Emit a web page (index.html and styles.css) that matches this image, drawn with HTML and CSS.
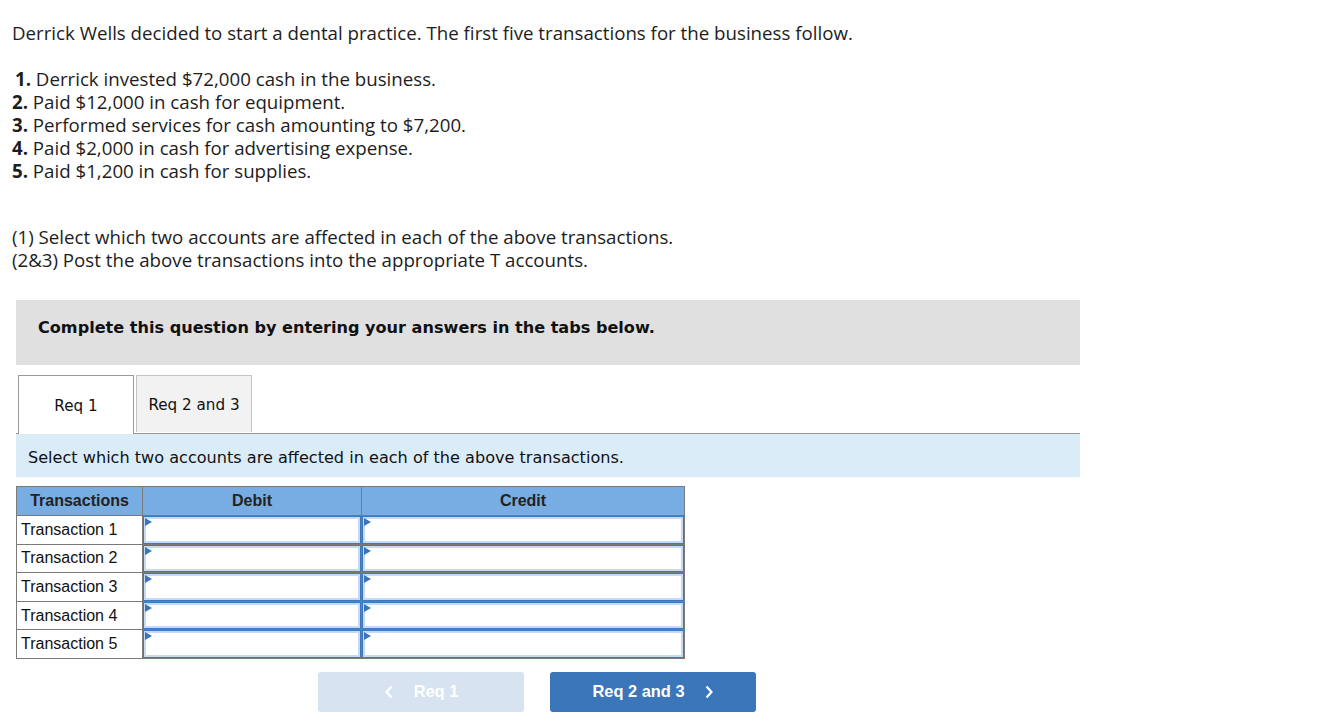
FILE: index.html
```html
<!DOCTYPE html>
<html>
<head>
<meta charset="utf-8">
<link rel="stylesheet" href="styles.css">
</head>
<body>
<div class="page">
  <p class="intro">Derrick Wells decided to start a dental practice. The first five transactions for the business follow.</p>
  <ol class="txlist">
    <li><b class="n1">1.</b> Derrick invested $72,000 cash in the business.</li>
    <li><b>2.</b> Paid $12,000 in cash for equipment.</li>
    <li><b>3.</b> Performed services for cash amounting to $7,200.</li>
    <li><b>4.</b> Paid $2,000 in cash for advertising expense.</li>
    <li><b>5.</b> Paid $1,200 in cash for supplies.</li>
  </ol>
  <div class="reqs">
    <div>(1) Select which two accounts are affected in each of the above transactions.</div>
    <div>(2&amp;3) Post the above transactions into the appropriate T accounts.</div>
  </div>

  <div class="question">
    <div class="banner">Complete this question by entering your answers in the tabs below.</div>
    <div class="tabs">
      <div class="tab active">Req 1</div>
      <div class="tab">Req 2 and 3</div>
    </div>
    <div class="instr">Select which two accounts are affected in each of the above transactions.</div>
    <table class="grid">
      <thead>
        <tr><th class="c1">Transactions</th><th class="c2">Debit</th><th class="c3">Credit</th></tr>
      </thead>
      <tbody>
        <tr><td class="label">Transaction 1</td><td class="cell"><div class="sel"></div></td><td class="cell"><div class="sel"></div></td></tr>
        <tr><td class="label">Transaction 2</td><td class="cell"><div class="sel"></div></td><td class="cell"><div class="sel"></div></td></tr>
        <tr><td class="label">Transaction 3</td><td class="cell"><div class="sel"></div></td><td class="cell"><div class="sel"></div></td></tr>
        <tr><td class="label">Transaction 4</td><td class="cell"><div class="sel"></div></td><td class="cell"><div class="sel"></div></td></tr>
        <tr><td class="label">Transaction 5</td><td class="cell"><div class="sel"></div></td><td class="cell"><div class="sel"></div></td></tr>
      </tbody>
    </table>
    <div class="nav">
      <div class="btn prev"><svg class="chev" width="10" height="14" viewBox="0 0 10 14"><path d="M7.5 1.5 L2.5 7 L7.5 12.5" fill="none" stroke="#fff" stroke-width="2.2"/></svg>Req 1</div>
      <div class="btn next">Req 2 and 3<svg class="chev" width="10" height="14" viewBox="0 0 10 14"><path d="M2.5 1.5 L7.5 7 L2.5 12.5" fill="none" stroke="#fff" stroke-width="2.2"/></svg></div>
    </div>
  </div>
</div>
</body>
</html>
```

FILE: styles.css
```css
html, body {
  margin: 0;
  padding: 0;
  background: #fff;
}
.page {
  padding: 21px 0 0 12px;
  font-family: "Open Sans", "Liberation Sans", sans-serif;
  color: #1d1d1d;
  font-size: 18.7px;
}
.intro {
  margin: 0;
  line-height: 23px;
}
.txlist {
  list-style: none;
  margin: 23px 0 0 0;
  padding: 0;
  line-height: 23px;
}
.txlist b {
  font-weight: 700;
}
.txlist .n1 {
  margin-left: 3px;
}
.reqs {
  margin-top: 43px;
  line-height: 23px;
}
.question {
  margin: 29px 0 0 4px;
  width: 1064px;
}
.banner {
  background: #e0e0e0;
  height: 65px;
  box-sizing: border-box;
  padding: 18px 0 0 22px;
  font-family: "DejaVu Sans", Verdana, sans-serif;
  font-weight: 700;
  font-size: 16.1px;
  color: #111;
}
.tabs {
  display: flex;
  gap: 2px;
  margin-top: 10px;
  padding-left: 2px;
  border-bottom: 1px solid #999;
  height: 58px;
}
.tab {
  width: 116px;
  height: 57px;
  box-sizing: border-box;
  padding-top: 2px;
  border: 1px solid #c4c4c4;
  border-bottom: none;
  background: #f2f2f2;
  font-family: "DejaVu Sans", Verdana, sans-serif;
  font-size: 15.2px;
  color: #111;
  display: flex;
  align-items: center;
  justify-content: center;
}
.tab.active {
  background: #fff;
  border-color: #999;
  height: 59px;
  margin-bottom: -1px;
}
.instr {
  background: #dbecf9;
  height: 43px;
  box-sizing: border-box;
  padding: 14px 0 0 12px;
  font-family: "DejaVu Sans", Verdana, sans-serif;
  font-size: 16.1px;
  color: #111;
}
.grid {
  margin-top: 9px;
  border-collapse: collapse;
  font-family: "Liberation Sans", Arial, sans-serif;
  font-size: 16px;
  color: #111;
}
.grid th {
  background: #78ade3;
  border: 1px solid #7a7a7a;
  height: 28px;
  padding: 0;
  font-weight: 700;
  color: #222;
}
.grid .c1 { width: 125px; }
.grid .c2 { width: 218px; }
.grid .c3 { width: 322px; }
.grid td {
  border: 1px solid #7a7a7a;
  height: 27.6px;
  padding: 0;
}
.grid td.label {
  padding-left: 4px;
}
.grid td.cell {
  padding: 0;
}
.sel {
  position: relative;
  height: 27.6px;
  box-sizing: border-box;
  border: 1px solid #3f78be;
  box-shadow: inset 0 0 0 2px #c6daf3;
  background: #fff;
}
.sel::before {
  content: "";
  position: absolute;
  left: 1px;
  top: 1px;
  border-left: 7px solid #3a74bd;
  border-top: 4px solid transparent;
  border-bottom: 4px solid transparent;
}
.nav {
  display: flex;
  gap: 26px;
  margin: 13px 0 0 302px;
}
.btn {
  width: 206px;
  height: 40px;
  border-radius: 3px;
  display: flex;
  align-items: center;
  justify-content: center;
  font-family: "Liberation Sans", Arial, sans-serif;
  font-weight: 700;
  font-size: 16.4px;
  color: #fff;
}
.btn.prev {
  background: #d7e3f1;
}
.btn.next {
  background: #3a76b9;
}
.prev .chev {
  margin-right: 20px;
}
.next .chev {
  margin-left: 19px;
}
```
